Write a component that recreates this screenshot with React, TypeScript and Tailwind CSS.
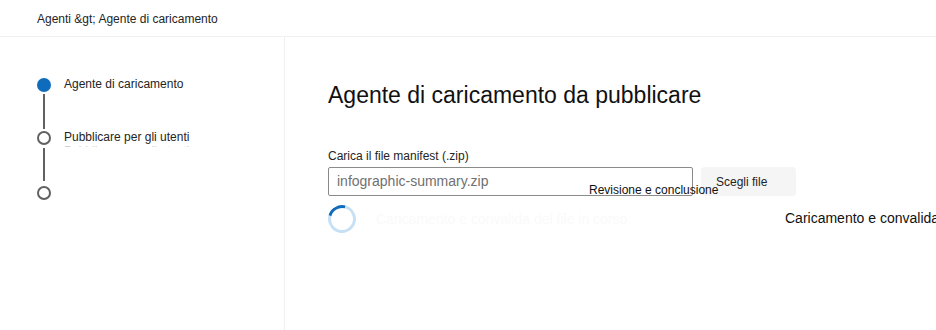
import React from "react";

export default function App() {
  const font = { fontFamily: '"Liberation Sans", Arial, sans-serif' };
  return (
    <div className="relative w-[936px] h-[330px] bg-white text-[#242424] overflow-hidden" style={font}>
      <div className="h-[37px] border-b border-[#f0f0f0] flex items-center pl-[37px] text-[12px] pt-[1px]">
        Agenti &amp;gt; Agente di caricamento
      </div>
      <div className="flex h-[293px]">
        <div className="w-[285px] border-r border-[#f0f0f0] pl-[37px] pt-[41px] shrink-0">
          <div className="flex flex-col">
            <div className="flex items-start gap-[13px]">
              <div className="flex flex-col items-center w-[14px]">
                <div className="w-[14px] h-[14px] rounded-full bg-[#0f6cbd]" />
                <div className="w-[2px] h-[35px] bg-[#616161] mt-[2px] mb-[2px]" />
              </div>
              <div className="text-[12px] leading-[14px] -mt-[1px]">Agente di caricamento</div>
            </div>
            <div className="flex items-start gap-[13px]">
              <div className="flex flex-col items-center w-[14px]">
                <div className="w-[14px] h-[14px] rounded-full border-2 border-[#616161] bg-white" />
                <div className="w-[2px] h-[33px] bg-[#616161] mt-[3px] mb-[5px]" />
              </div>
              <div className="flex flex-col -mt-[1px]">
                <div className="text-[12px] leading-[14px] whitespace-nowrap">Pubblicare per gli utenti</div>
                <div className="h-[3px] overflow-hidden text-[12px] leading-[14px] text-[#d0d0d0] whitespace-nowrap">Pubblicare per gli utenti</div>
              </div>
            </div>
            <div className="flex items-start gap-[13px]">
              <div className="w-[14px] h-[14px] rounded-full border-2 border-[#616161] bg-white" />
              <div className="h-[2px] overflow-hidden text-[12px] leading-[14px] text-[#d0d0d0] mt-[10px] whitespace-nowrap">Revisione e conclusione</div>
            </div>
          </div>
        </div>
        <div className="flex-1 pl-[43px] pt-[44px]">
          <h1 className="text-[23px] leading-[28px] text-[#111] whitespace-nowrap">Agente di caricamento da pubblicare</h1>
          <div className="mt-[40px] text-[12px] leading-[14px]">Carica il file manifest (.zip)</div>
          <div className="flex mt-[4px] gap-[8px]">
            <div className="w-[365px] h-[29px] border border-[#8a8a8a] rounded-[2px] flex items-center pl-[8px] text-[14px] text-[#707070]">
              infographic-summary.zip
            </div>
            <div className="w-[95px] h-[29px] bg-[#f5f5f5] rounded-[4px] text-[12px] pl-[15px] pt-[6px]">Scegli file</div>
          </div>
          <div className="flex items-center mt-[9px] gap-[20px]">
            <div className="w-[28px] h-[28px] rounded-full border-[3px] border-[#c7e0f4] border-t-[#0f6cbd] rotate-[-30deg]" style={{ borderRightColor: "#c7e0f4" }} />
            <div className="text-[14px] text-[#fafafa]">Caricamento e convalida del file in corso</div>
          </div>
        </div>
      </div>
      <div className="absolute left-[589px] top-[183px] text-[12px] leading-[14px] text-[#111] whitespace-nowrap">Revisione e conclusione</div>
      <div className="absolute left-[785px] top-[210px] text-[14px] leading-[16px] text-[#111] whitespace-nowrap">Caricamento e convalida</div>
    </div>
  );
}
